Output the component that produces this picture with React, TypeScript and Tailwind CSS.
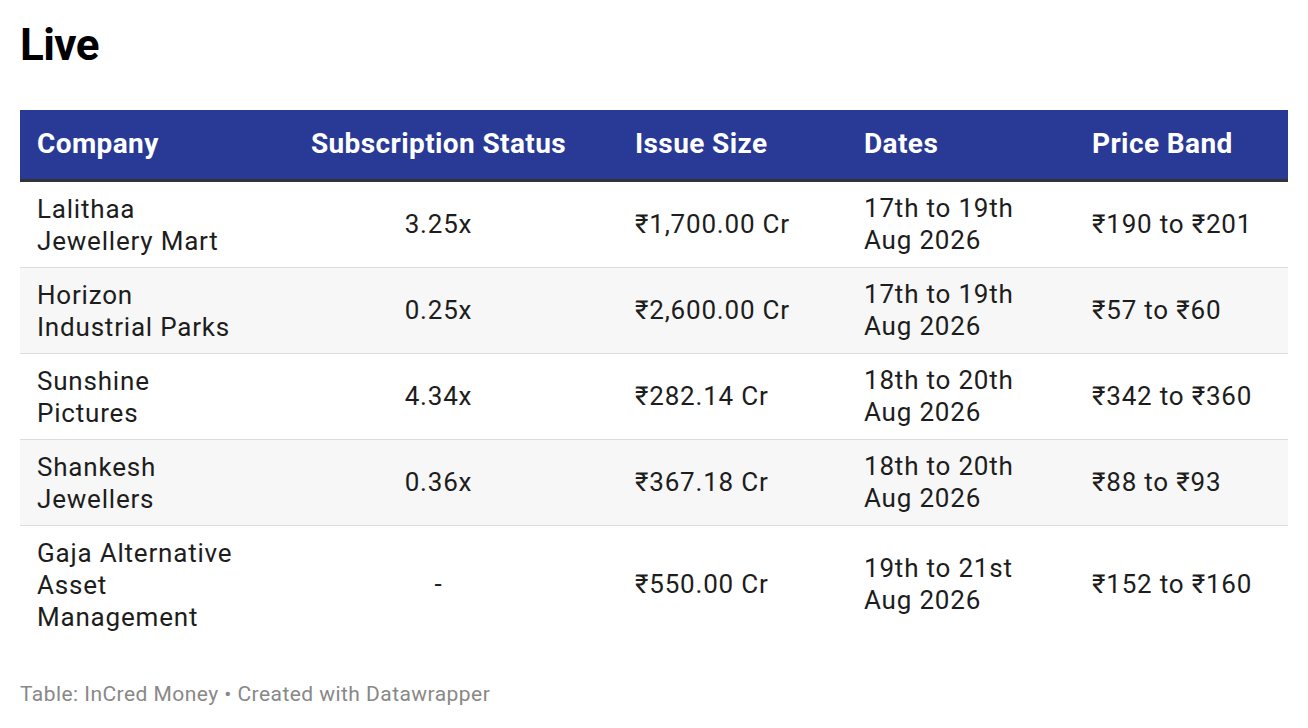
const rows = [
  { company: "Lalithaa Jewellery Mart", lines: ["Lalithaa", "Jewellery Mart"], sub: "3.25x", size: "₹1,700.00 Cr", dates: ["17th to 19th", "Aug 2026"], band: "₹190 to ₹201" },
  { company: "Horizon Industrial Parks", lines: ["Horizon", "Industrial Parks"], sub: "0.25x", size: "₹2,600.00 Cr", dates: ["17th to 19th", "Aug 2026"], band: "₹57 to ₹60" },
  { company: "Sunshine Pictures", lines: ["Sunshine", "Pictures"], sub: "4.34x", size: "₹282.14 Cr", dates: ["18th to 20th", "Aug 2026"], band: "₹342 to ₹360" },
  { company: "Shankesh Jewellers", lines: ["Shankesh", "Jewellers"], sub: "0.36x", size: "₹367.18 Cr", dates: ["18th to 20th", "Aug 2026"], band: "₹88 to ₹93" },
  { company: "Gaja Alternative Asset Management", lines: ["Gaja Alternative", "Asset", "Management"], sub: "-", size: "₹550.00 Cr", dates: ["19th to 21st", "Aug 2026"], band: "₹152 to ₹160" },
];

export default function App() {
  return (
    <div className="min-h-screen bg-white px-5 pt-[22px] font-['Roboto',_'Liberation_Sans',_sans-serif] text-[#1d1d1d]">
      <h1 className="text-[44px] font-bold leading-[46px] tracking-[-0.6px] text-black">Live</h1>

      <table className="mt-[42px] w-full border-collapse text-[26px] leading-[32px] tracking-[0.8px]">
        <thead>
          <tr className="h-[70px] bg-[#283a96] text-left text-[28px] font-bold tracking-[0.4px] text-white">
            <th className="w-[239px] pl-[17px] font-bold">Company</th>
            <th className="w-[359px] text-center font-bold">Subscription Status</th>
            <th className="w-[229px] pl-[17px] font-bold">Issue Size</th>
            <th className="w-[228px] pl-[17px] font-bold">Dates</th>
            <th className="pl-[17px] font-bold">Price Band</th>
          </tr>
        </thead>
        <tbody className="border-t-[3px] border-[#333333]">
          {rows.map((r, i) => (
            <tr
              key={r.company}
              className={`${i % 2 === 1 ? "bg-[#f7f7f7]" : "bg-white"} ${i < rows.length - 1 ? "border-b border-[#dddddd]" : ""}`}
            >
              <td className="pt-[11px] pb-[10px] pl-[17px] align-middle">
                {r.lines.map((l) => (
                  <div key={l}>{l}</div>
                ))}
              </td>
              <td className="text-center align-middle">{r.sub}</td>
              <td className="pl-[17px] align-middle">{r.size}</td>
              <td className="pl-[17px] align-middle">
                {r.dates.map((d) => (
                  <div key={d}>{d}</div>
                ))}
              </td>
              <td className="pl-[17px] align-middle">{r.band}</td>
            </tr>
          ))}
        </tbody>
      </table>

      <p className="mt-[39px] text-[21px] leading-[24px] tracking-[0.45px] text-[#888888]">
        Table: InCred Money • Created with Datawrapper
      </p>
    </div>
  );
}
